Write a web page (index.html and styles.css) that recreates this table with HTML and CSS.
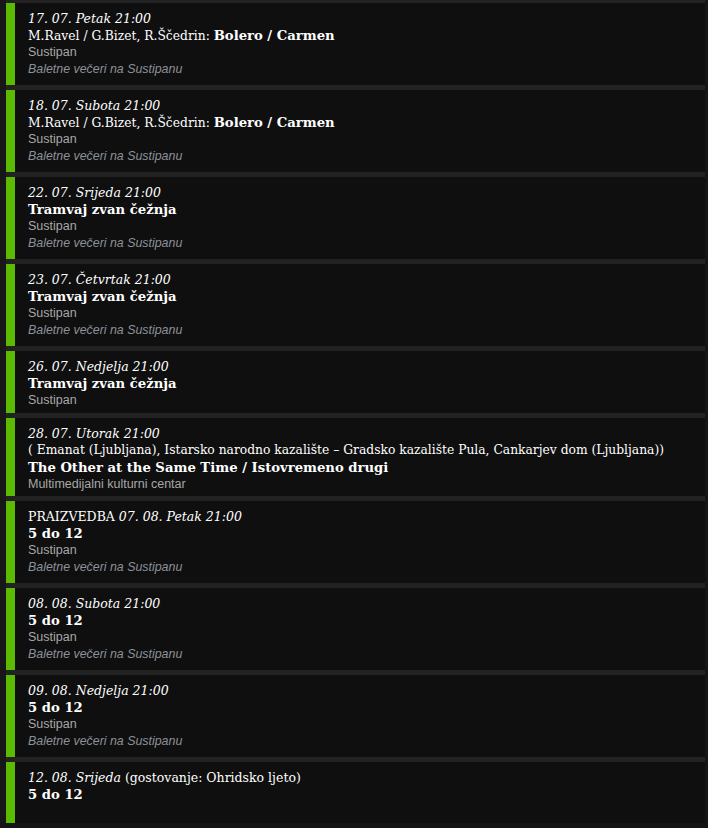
FILE: index.html
```html
<!DOCTYPE html>
<html lang="hr">
<head>
    <meta charset="UTF-8">
    <meta name="viewport" content="width=device-width, initial-scale=1.0">
    <title>Raspored</title>
    <link rel="stylesheet" href="styles.css">
</head>
<body>
    <div class="list">
        <div class="event">
            <p class="date">17. 07. Petak 21:00</p>
            <p class="title">M.Ravel / G.Bizet, R.Ščedrin: <b>Bolero / Carmen</b></p>
            <p class="venue">Sustipan</p>
            <p class="fest">Baletne večeri na Sustipanu</p>
        </div>
        <div class="event">
            <p class="date">18. 07. Subota 21:00</p>
            <p class="title">M.Ravel / G.Bizet, R.Ščedrin: <b>Bolero / Carmen</b></p>
            <p class="venue">Sustipan</p>
            <p class="fest">Baletne večeri na Sustipanu</p>
        </div>
        <div class="event">
            <p class="date">22. 07. Srijeda 21:00</p>
            <p class="title"><b>Tramvaj zvan čežnja</b></p>
            <p class="venue">Sustipan</p>
            <p class="fest">Baletne večeri na Sustipanu</p>
        </div>
        <div class="event">
            <p class="date">23. 07. Četvrtak 21:00</p>
            <p class="title"><b>Tramvaj zvan čežnja</b></p>
            <p class="venue">Sustipan</p>
            <p class="fest">Baletne večeri na Sustipanu</p>
        </div>
        <div class="event short">
            <p class="date">26. 07. Nedjelja 21:00</p>
            <p class="title"><b>Tramvaj zvan čežnja</b></p>
            <p class="venue">Sustipan</p>
        </div>
        <div class="event">
            <p class="date">28. 07. Utorak 21:00</p>
            <p class="title">( Emanat (Ljubljana), Istarsko narodno kazalište – Gradsko kazalište Pula, Cankarjev dom (Ljubljana))</p>
            <p class="title"><b>The Other at the Same Time / Istovremeno drugi</b></p>
            <p class="venue">Multimedijalni kulturni centar</p>
        </div>
        <div class="event">
            <p class="date"><span class="plain">PRAIZVEDBA</span> 07. 08. Petak 21:00</p>
            <p class="title"><b>5 do 12</b></p>
            <p class="venue">Sustipan</p>
            <p class="fest">Baletne večeri na Sustipanu</p>
        </div>
        <div class="event">
            <p class="date">08. 08. Subota 21:00</p>
            <p class="title"><b>5 do 12</b></p>
            <p class="venue">Sustipan</p>
            <p class="fest">Baletne večeri na Sustipanu</p>
        </div>
        <div class="event">
            <p class="date">09. 08. Nedjelja 21:00</p>
            <p class="title"><b>5 do 12</b></p>
            <p class="venue">Sustipan</p>
            <p class="fest">Baletne večeri na Sustipanu</p>
        </div>
        <div class="event">
            <p class="date">12. 08. Srijeda <span class="plain">(gostovanje: Ohridsko ljeto)</span></p>
            <p class="title"><b>5 do 12</b></p>
            <p class="venue"></p>
        </div>
    </div>
</body>
</html>
```

FILE: styles.css
```css
body{
    margin: 0;
    background-color: #151515;
    font-family: "DejaVu Serif", Georgia, serif;
}

.list{
    width: 699px;
    padding: 3px 0 0 6px;
    display: flex;
    flex-direction: column;
    gap: 5px;
    background: linear-gradient(90deg, #171717 0px, #171717 6px, #222 6px, #222 705px, #2a2a2a 705px);
}

.event{
    background-color: #0f0f0f;
    border-left: 9px solid #5cbb00;
    padding: 7px 10px 4px 13px;
}
.event.short{
    padding-bottom: 5px;
}

.event p{
    margin: 0;
}

.date{
    font-style: italic;
    font-size: 12.5px;
    line-height: 17px;
    height: 17px;
    color: #fff;
}
.date .plain{
    font-style: normal;
}

.title{
    font-size: 12.3px;
    line-height: 17px;
    height: 17px;
    white-space: nowrap;
    color: #fff;
}
.title b{
    font-size: 13.2px;
    line-height: 17px;
}

.venue{
    font-family: "Liberation Sans", Arial, sans-serif;
    font-size: 12.5px;
    line-height: 16px;
    height: 16px;
    color: #a8a8a8;
}

.fest{
    font-family: "Liberation Sans", Arial, sans-serif;
    font-style: italic;
    font-size: 12.4px;
    line-height: 17px;
    height: 17px;
    padding: 1px 0 3px;
    color: #8c919a;
}
```
